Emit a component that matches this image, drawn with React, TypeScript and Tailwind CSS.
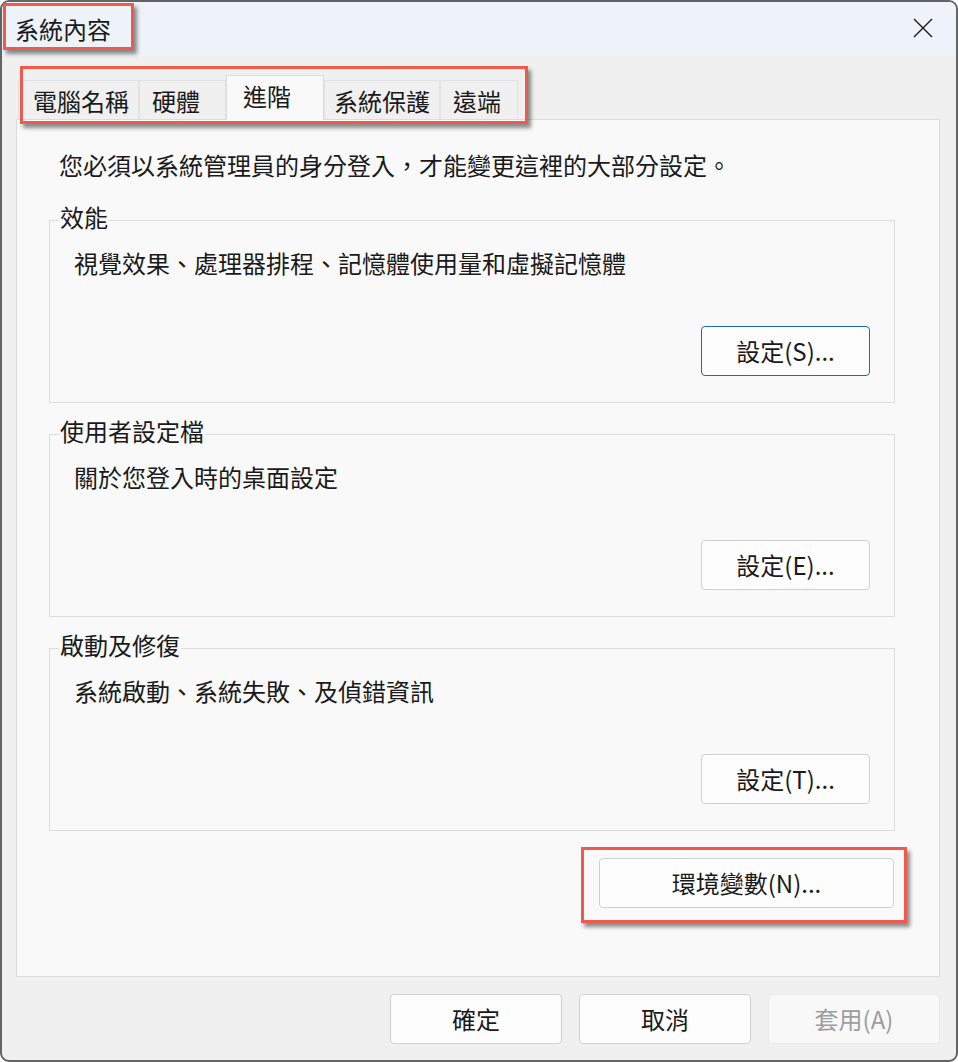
import { type FC, type ReactNode } from "react"

const tabs = [
  { label: "電腦名稱", w: "w-[121px]", pl: "pl-[14px]" },
  { label: "硬體", w: "w-[87px]", pl: "pl-[12px]" },
  { label: "進階", w: "w-[98px]", pl: "pl-[16px]", active: true },
  { label: "系統保護", w: "w-[116px]", pl: "pl-[9px]" },
  { label: "遠端", w: "w-[78px]", pl: "pl-[12px]" },
]

interface BtnProps {
  children: ReactNode
  w: string
  primary?: boolean
  disabled?: boolean
}

const Btn: FC<BtnProps> = ({ children, w, primary, disabled }) => {
  let tone = "border-[#d0d0d0] bg-[#fdfdfd] text-[#1a1a1a]"
  if (primary) tone = "border-[#2169b3] bg-[#fdfdfd] text-[#1a1a1a]"
  if (disabled) tone = "border-[#e8e8e8] bg-[#f8f8f8] text-[#9d9d9d]"
  return (
    <button
      className={`${w} h-[50px] shrink-0 rounded-[4px] border ${tone} flex items-center justify-center leading-none`}
    >
      {children}
    </button>
  )
}

interface GroupProps {
  title: string
  text: string
  button: string
  primary?: boolean
}

const Group: FC<GroupProps> = ({ title, text, button, primary }) => {
  return (
    <fieldset className="border border-[#dcdcdc]">
      <legend className="ml-[9px] px-[1px] h-[24px] leading-[24px]">
        <span className="relative -top-[3px]">{title}</span>
      </legend>
      <div className="flex flex-col pl-[24px] pr-[24px] pb-[26px]">
        <p className="mt-[16px] h-[30px] leading-[30px]">{text}</p>
        <div className="mt-[48px] flex justify-end">
          <Btn w="w-[169px]" primary={primary}>
            {button}
          </Btn>
        </div>
      </div>
    </fieldset>
  )
}

const Highlight: FC<{ className: string }> = ({ className }) => (
  <div
    className={`absolute border-[3px] border-[#ef5a4d] shadow-[3px_4px_4px_rgba(0,0,0,0.45)] pointer-events-none ${className}`}
  />
)

export default function App() {
  return (
    <div className="relative w-[958px] h-[1062px] bg-white font-['Noto_Sans_CJK_TC','Liberation_Sans',sans-serif] text-[24px] text-[#1a1a1a]">
      <div className="w-full h-full rounded-[9px] border-2 border-[#646464] overflow-hidden flex flex-col bg-[#f0f0f0]">
        {/* title bar */}
        <div className="h-[54px] shrink-0 bg-[#eef3f9] flex items-center justify-between pl-[13px] pr-[23px]">
          <span className="leading-none">系統內容</span>
          <svg width="20" height="20" viewBox="0 0 20 20" className="mt-[-2px]">
            <path d="M1 1 L19 19 M19 1 L1 19" stroke="#1a1a1a" strokeWidth="1.4" />
          </svg>
        </div>

        {/* body */}
        <div className="flex-1 flex flex-col pl-[14px] pr-[16px] pt-[19px]">
          <div className="h-[45px] flex items-end pl-[2px]">
            {tabs.map((t) =>
              t.active ? (
                <div
                  key={t.label}
                  className={`${t.w} ${t.pl} relative z-10 h-[45px] bg-[#f9f9f9] border-t border-l border-r border-[#dcdcdc] flex items-center pb-[5px] leading-none`}
                >
                  {t.label}
                </div>
              ) : (
                <div
                  key={t.label}
                  className={`${t.w} ${t.pl} h-[40px] bg-[#f0f0f0] border-t border-l border-r border-[#e2e2e2] flex items-center leading-none`}
                >
                  {t.label}
                </div>
              )
            )}
          </div>

          <div className="-mt-px h-[858px] border border-[#dcdcdc] bg-[#f9f9f9] flex flex-col">
            <p className="ml-[42px] mt-[30px] h-[30px] leading-[30px]">
              您必須以系統管理員的身分登入，才能變更這裡的大部分設定。
            </p>
            <div className="ml-[32px] mr-[44px] mt-[28px] flex flex-col">
              <Group
                title="效能"
                text="視覺效果、處理器排程、記憶體使用量和虛擬記憶體"
                button="設定(S)..."
                primary
              />
              <div className="mt-[19px]">
                <Group title="使用者設定檔" text="關於您登入時的桌面設定" button="設定(E)..." />
              </div>
              <div className="mt-[19px]">
                <Group title="啟動及修復" text="系統啟動、系統失敗、及偵錯資訊" button="設定(T)..." />
              </div>
              <div className="mt-[27px] flex justify-end pr-[1px]">
                <Btn w="w-[295px]">環境變數(N)...</Btn>
              </div>
            </div>
          </div>

          <div className="mt-[17px] flex justify-end gap-[17px]">
            <Btn w="w-[172px]">確定</Btn>
            <Btn w="w-[172px]">取消</Btn>
            <Btn w="w-[172px]" disabled>
              套用(A)
            </Btn>
          </div>
        </div>
      </div>

      <Highlight className="left-[3px] top-[3px] w-[131px] h-[47px]" />
      <Highlight className="left-[20px] top-[66px] w-[508px] h-[58px]" />
      <Highlight className="left-[581px] top-[847px] w-[326px] h-[76px]" />
    </div>
  )
}
